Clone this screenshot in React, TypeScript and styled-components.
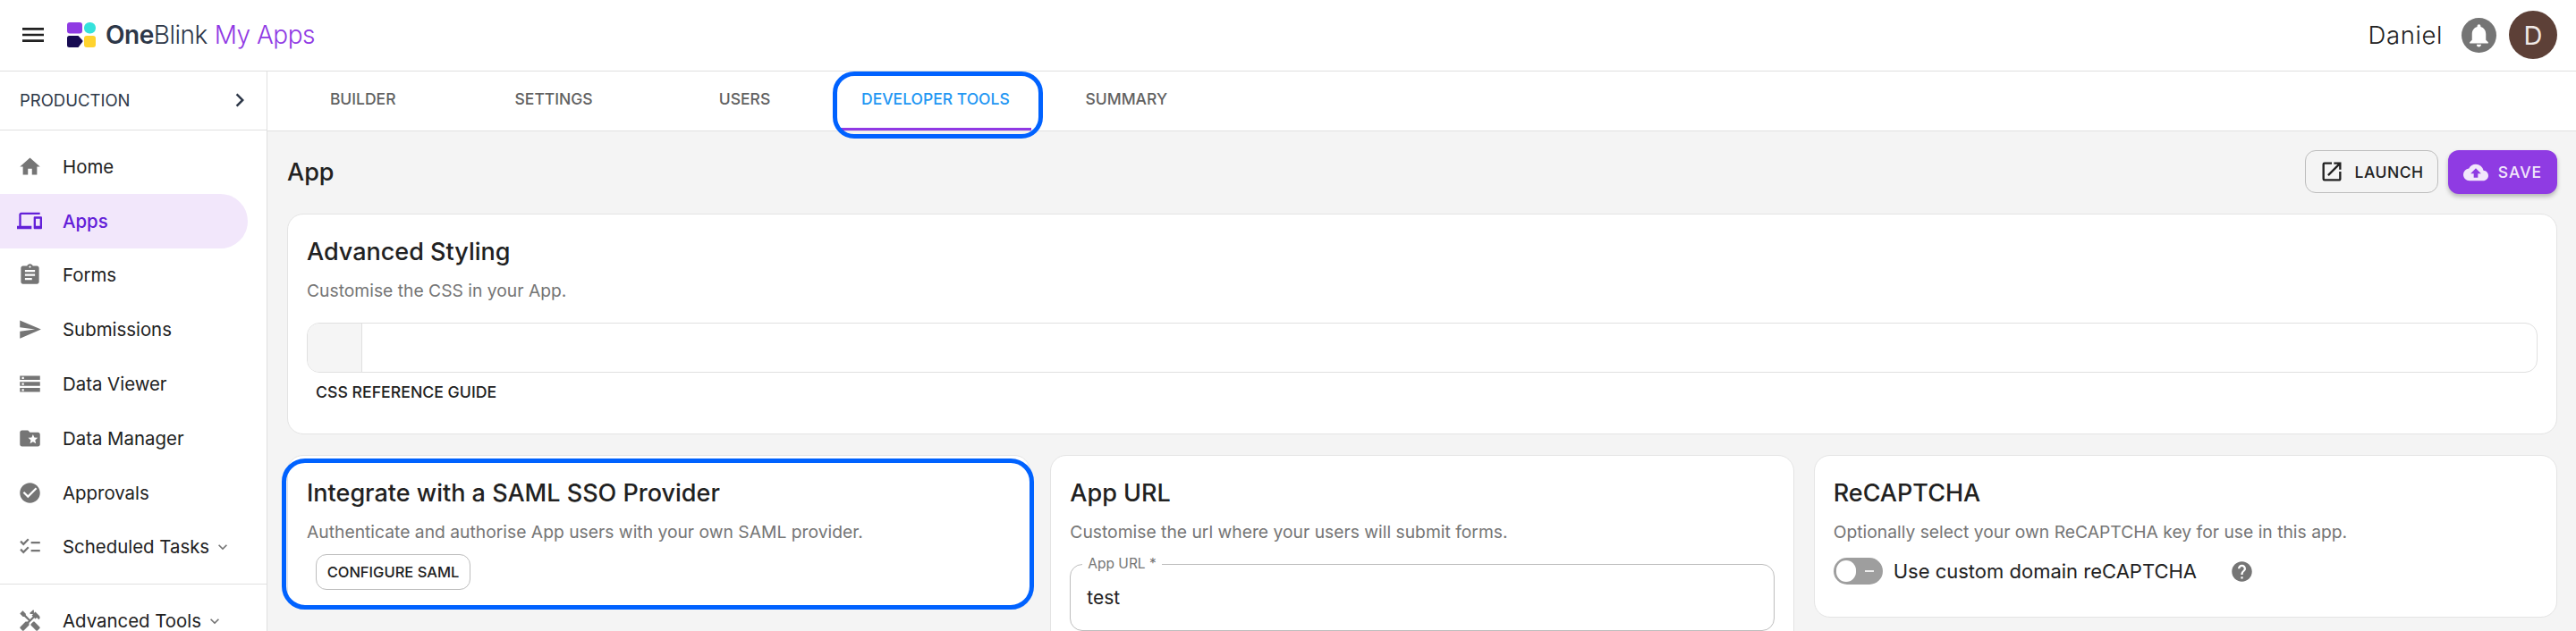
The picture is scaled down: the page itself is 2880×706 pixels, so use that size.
import React from "react";
import styled, { createGlobalStyle } from "styled-components";
import {
  MdMenu, MdHome, MdDevices, MdAssignment, MdSend, MdStorage, MdFolderSpecial, MdCheckCircle,
  MdChecklist, MdHandyman, MdExpandMore, MdChevronRight, MdNotifications, MdOpenInNew, MdCloudUpload, MdHelp,
} from "react-icons/md";

const FONT = `Inter, "Noto Sans", "Liberation Sans", sans-serif`;

const Global = createGlobalStyle`
  html, body { margin: 0; padding: 0; height: 100%; overflow: hidden; background: #fff; }
  #root { height: 100%; }
  * { box-sizing: border-box; }
  body { font-family: ${FONT}; color: #212121; }
`;

const Page = styled.div`
  height: 706px;
  display: flex;
  flex-direction: column;
  overflow: hidden;
`;

const Header = styled.header`
  flex: 0 0 80px;
  display: flex;
  align-items: center;
  padding: 0 21px 1px 21px;
  border-bottom: 1px solid #e0e0e0;
`;

const MenuButton = styled.div`
  display: flex;
  color: #212121;
  margin-right: 22px;
`;

const LogoText = styled.div`
  margin-left: 11px;
  font-size: 28px;
  letter-spacing: -0.5px;
  white-space: nowrap;
  color: #2d3748;
`;
const LogoStrong = styled.span`font-weight: 600;`;
const LogoLight = styled.span`font-weight: 300;`;
const LogoPurple = styled.span`
  font-weight: 300;
  color: #9039e4;
  margin-left: 8px;
`;

const Spacer = styled.div`flex: 1;`;

const UserName = styled.div`
  font-size: 27.5px;
  font-weight: 300;
  letter-spacing: 0.6px;
  margin-right: 21px;
`;

const BellCircle = styled.div`
  width: 39px;
  height: 39px;
  border-radius: 50%;
  background: #757575;
  color: #fff;
  display: flex;
  align-items: center;
  justify-content: center;
  margin-right: 14px;
`;

const Avatar = styled.div`
  width: 54px;
  height: 54px;
  border-radius: 50%;
  background: #5d4037;
  color: #f0e9e6;
  display: flex;
  align-items: center;
  justify-content: center;
  font-size: 29px;
  font-weight: 400;
`;

const Body = styled.div`
  flex: 1;
  display: flex;
  min-height: 0;
`;

const Sidebar = styled.aside`
  flex: 0 0 299px;
  border-right: 1px solid #e0e0e0;
`;

const EnvRow = styled.div`
  height: 66px;
  display: flex;
  align-items: center;
  justify-content: space-between;
  padding: 0 15px 2px 22px;
  border-bottom: 1px solid #e0e0e0;
  font-size: 18.5px;
  font-weight: 400;
  color: #2d3748;
`;

const NavList = styled.nav<{ $first?: boolean }>`
  padding-top: 10px;
  padding-bottom: ${(p) => (p.$first ? "11px" : "0")};
  border-bottom: ${(p) => (p.$first ? "1px solid #e0e0e0" : "none")};
`;

const NavItem = styled.div<{ $active?: boolean }>`
  height: 60.8px;
  width: 277px;
  display: flex;
  align-items: center;
  padding-left: 20px;
  gap: 23px;
  font-size: 20.4px;
  font-weight: ${(p) => (p.$active ? 500 : 400)};
  color: ${(p) => (p.$active ? "#6320d8" : "#212121")};
  background: ${(p) => (p.$active ? "#f2e7fb" : "transparent")};
  border-radius: 0 31px 31px 0;
  white-space: nowrap;
  svg:first-child { color: ${(p) => (p.$active ? "#6320d8" : "#757575")}; flex: none; }
`;

const AppsIcon = styled(MdDevices)`
  margin-left: -1px;
`;

const NavCaret = styled.span`
  display: flex;
  margin-left: -18px;
  color: #616161;
`;

const Main = styled.main`
  flex: 1;
  min-width: 0;
  display: flex;
  flex-direction: column;
`;

const TabBar = styled.div`
  flex: 0 0 67px;
  display: flex;
  border-bottom: 1px solid #e0e0e0;
`;

const Tab = styled.div<{ $active?: boolean }>`
  position: relative;
  width: 213.4px;
  display: flex;
  align-items: center;
  justify-content: center;
  padding-bottom: 2px;
  font-size: 17.5px;
  font-weight: 500;
  color: ${(p) => (p.$active ? "#2196f3" : "#616161")};
  border-bottom: 3px solid ${(p) => (p.$active ? "#9039e4" : "transparent")};
`;

const TabHighlight = styled.div`
  position: absolute;
  inset: 0 -13px -12px -8px;
  border: 5px solid #0062ff;
  border-radius: 24px;
`;

const Content = styled.div`
  flex: 1;
  min-height: 0;
  overflow: hidden;
  background: #f4f4f4;
  padding: 21px 21px 0 22px;
`;

const TitleRow = styled.div`
  display: flex;
  align-items: center;
  justify-content: space-between;
  height: 49px;
  margin-bottom: 22px;
`;

const PageTitle = styled.h1`
  margin: 0;
  font-size: 27px;
  font-weight: 500;
`;

const Actions = styled.div`
  display: flex;
  gap: 11px;
`;

const OutlineButton = styled.button`
  height: 48px;
  width: 149px;
  display: flex;
  align-items: center;
  justify-content: center;
  gap: 11px;
  border: 1px solid #bdbdbd;
  border-radius: 12px;
  background: transparent;
  color: #212121;
  font: 500 17.5px ${FONT};
  letter-spacing: 0.5px;
`;

const SaveButton = styled.button`
  height: 49px;
  width: 122px;
  display: flex;
  align-items: center;
  justify-content: center;
  gap: 11px;
  border: none;
  border-radius: 12px;
  background: #8f3be3;
  color: #f2e7fb;
  font: 500 17.5px ${FONT};
  letter-spacing: 1px;
  box-shadow: 0 3px 5px rgba(0, 0, 0, 0.25);
`;

const Card = styled.section`
  position: relative;
  background: #fff;
  border: 1px solid #e4e4e4;
  border-radius: 18px;
  padding: 21px 21px;
`;

const CardTitle = styled.h2`
  margin: 0 0 8px;
  font-size: 27px;
  line-height: 42px;
  font-weight: 500;
  white-space: nowrap;
`;

const CardText = styled.p`
  margin: 0;
  font-size: 19.3px;
  line-height: 28px;
  font-weight: 400;
  color: #757575;
  white-space: nowrap;
`;

const EditorField = styled.div`
  height: 56px;
  margin-top: 22px;
  display: flex;
  border: 1px solid #e0e0e0;
  border-radius: 14px;
  overflow: hidden;
`;

const EditorGutter = styled.div`
  width: 61px;
  background: #f5f5f5;
  border-right: 1px solid #e0e0e0;
`;

const TextLink = styled.div`
  margin: 8px 0 11px 10px;
  font-size: 17.7px;
  line-height: 28px;
  font-weight: 500;
`;

const Columns = styled.div`
  display: grid;
  grid-template-columns: repeat(3, 1fr);
  gap: 22px;
  margin-top: 23px;
  align-items: start;
`;

const SamlHighlight = styled.div`
  position: absolute;
  inset: 3px -5px -1px -7px;
  border: 5px solid #0062ff;
  border-radius: 26px;
`;

const ConfigureButton = styled.div`
  display: flex;
  align-items: center;
  justify-content: center;
  width: 173px;
  height: 40px;
  margin: 11px 0 0 10px;
  border: 1px solid #bdbdbd;
  border-radius: 12px;
  font-size: 16.5px;
  font-weight: 500;
`;

const UrlField = styled.div`
  position: relative;
  height: 75px;
  margin-top: 22px;
  display: flex;
  align-items: center;
  padding: 0 18px 0;
  border: 1px solid #bdbdbd;
  border-radius: 14px;
  font-size: 21px;
`;

const UrlLegend = styled.span`
  position: absolute;
  top: -11px;
  left: 13px;
  padding: 0 6px;
  background: #fff;
  font-size: 15.5px;
  line-height: 20px;
  color: #757575;
`;

const SwitchRow = styled.div`
  display: flex;
  align-items: center;
  margin: 15px 0 15px;
  font-size: 22px;
`;

const SwitchTrack = styled.div`
  width: 55px;
  height: 30px;
  border-radius: 15px;
  background: #9e9e9e;
  display: flex;
  align-items: center;
  padding: 0 10px 0 3px;
  justify-content: space-between;
  margin-right: 12px;
`;
const SwitchKnob = styled.div`
  width: 22px;
  height: 24px;
  border-radius: 12px;
  background: #fff;
`;
const SwitchDash = styled.div`
  width: 10px;
  height: 2px;
  background: #eee;
`;

const HelpIcon = styled.span`
  display: flex;
  color: #757575;
  margin-left: 37px;
`;

const LogoMark = () => (
  <svg width="32" height="28" viewBox="0 0 32 28" aria-hidden="true">
    <rect x="0" y="0" width="17" height="12.5" rx="3" fill="#8f3be3" />
    <rect x="19" y="0" width="13" height="12.5" rx="6" fill="#35e2dc" />
    <path d="M2.5 15H12.5L17.5 20.5V21.5L12.5 28H2.5A2.5 2.5 0 0 1 0 25.5V17.5A2.5 2.5 0 0 1 2.5 15Z" fill="#170b52" />
    <rect x="19" y="15" width="13" height="13" rx="3" fill="#ffd32e" />
  </svg>
);

const App = () => (
  <Page>
    <Global />
    <Header>
      <MenuButton><MdMenu size={32} /></MenuButton>
      <LogoMark />
      <LogoText>
        <LogoStrong>One</LogoStrong><LogoLight>Blink</LogoLight><LogoPurple>My Apps</LogoPurple>
      </LogoText>
      <Spacer />
      <UserName>Daniel</UserName>
      <BellCircle><MdNotifications size={31} /></BellCircle>
      <Avatar>D</Avatar>
    </Header>
    <Body>
      <Sidebar>
        <EnvRow>PRODUCTION <MdChevronRight size={30} /></EnvRow>
        <NavList $first>
          <NavItem><MdHome size={27} />Home</NavItem>
          <NavItem $active><AppsIcon size={28} />Apps</NavItem>
          <NavItem><MdAssignment size={27} />Forms</NavItem>
          <NavItem><MdSend size={27} />Submissions</NavItem>
          <NavItem><MdStorage size={27} />Data Viewer</NavItem>
          <NavItem><MdFolderSpecial size={27} />Data Manager</NavItem>
          <NavItem><MdCheckCircle size={27} />Approvals</NavItem>
          <NavItem><MdChecklist size={27} />Scheduled Tasks <NavCaret><MdExpandMore size={20} /></NavCaret></NavItem>
        </NavList>
        <NavList>
          <NavItem><MdHandyman size={27} />Advanced Tools <NavCaret><MdExpandMore size={20} /></NavCaret></NavItem>
        </NavList>
      </Sidebar>
      <Main>
        <TabBar>
          <Tab>BUILDER</Tab>
          <Tab>SETTINGS</Tab>
          <Tab>USERS</Tab>
          <Tab $active>DEVELOPER TOOLS<TabHighlight /></Tab>
          <Tab>SUMMARY</Tab>
        </TabBar>
        <Content>
          <TitleRow>
            <PageTitle>App</PageTitle>
            <Actions>
              <OutlineButton><MdOpenInNew size={28} />LAUNCH</OutlineButton>
              <SaveButton><MdCloudUpload size={28} />SAVE</SaveButton>
            </Actions>
          </TitleRow>
          <Card>
            <CardTitle>Advanced Styling</CardTitle>
            <CardText>Customise the CSS in your App.</CardText>
            <EditorField><EditorGutter /></EditorField>
            <TextLink>CSS REFERENCE GUIDE</TextLink>
          </Card>
          <Columns>
            <Card>
              <CardTitle>Integrate with a SAML SSO Provider</CardTitle>
              <CardText>Authenticate and authorise App users with your own SAML provider.</CardText>
              <ConfigureButton>CONFIGURE SAML</ConfigureButton>
              <SamlHighlight />
            </Card>
            <Card>
              <CardTitle>App URL</CardTitle>
              <CardText>Customise the url where your users will submit forms.</CardText>
              <UrlField><UrlLegend>App URL *</UrlLegend>test</UrlField>
            </Card>
            <Card>
              <CardTitle>ReCAPTCHA</CardTitle>
              <CardText>Optionally select your own ReCAPTCHA key for use in this app.</CardText>
              <SwitchRow>
                <SwitchTrack><SwitchKnob /><SwitchDash /></SwitchTrack>
                Use custom domain reCAPTCHA
                <HelpIcon><MdHelp size={27} /></HelpIcon>
              </SwitchRow>
            </Card>
          </Columns>
        </Content>
      </Main>
    </Body>
  </Page>
);

export default App;
